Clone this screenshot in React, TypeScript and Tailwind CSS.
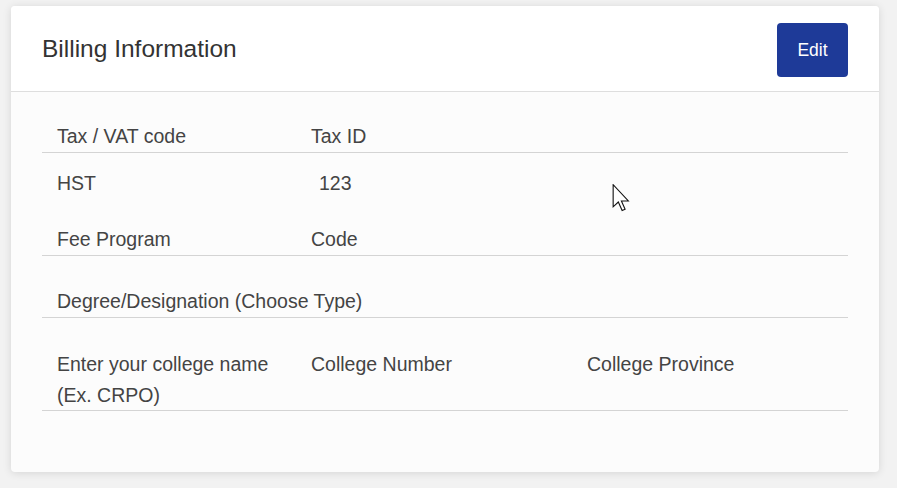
import React from "react";

const font = { fontFamily: '"Liberation Sans", Arial, sans-serif' };

export default function App() {
    return (
        <div className="w-[897px] h-[488px] bg-[#f2f2f2] pt-[6px] pl-[11px] relative overflow-hidden" style={font}>
            <div className="w-[868px] h-[466px] rounded-[4px] bg-[#fcfcfc] shadow-[0_1px_8px_rgba(0,0,0,0.12)] overflow-hidden">
                <header className="h-[86px] bg-white border-b border-[#dedede] flex items-center justify-between px-[31px] pt-[2px]">
                    <h1 className="text-[24.5px] text-[#333] leading-none">Billing Information</h1>
                    <button className="w-[71px] h-[54px] rounded-[4px] bg-[#1e3a98] text-white text-[17.5px] mt-[1px]">
                        Edit
                    </button>
                </header>

                <div className="px-[31px] pt-[29px] text-[19.5px] leading-[31px] text-[#444]">
                    <div className="grid grid-cols-[254px_276px_1fr] pl-[15px] border-b border-[#d4d4d4]">
                        <span>Tax / VAT code</span>
                        <span>Tax ID</span>
                    </div>
                    <div className="grid grid-cols-[254px_276px_1fr] pl-[15px] mt-[15px]">
                        <span>HST</span>
                        <span className="pl-[8px]">123</span>
                    </div>
                    <div className="grid grid-cols-[254px_276px_1fr] pl-[15px] mt-[25px] border-b border-[#d4d4d4]">
                        <span>Fee Program</span>
                        <span>Code</span>
                    </div>
                    <div className="pl-[15px] mt-[30px] border-b border-[#d4d4d4]">
                        Degree/Designation (Choose Type)
                    </div>
                    <div className="grid grid-cols-[254px_276px_1fr] pl-[15px] mt-[31px] h-[62px] border-b border-[#d4d4d4]">
                        <span>
                            Enter your college name
                            <br />
                            (Ex. CRPO)
                        </span>
                        <span>College Number</span>
                        <span>College Province</span>
                    </div>
                </div>
            </div>

            {/* mouse pointer captured in the screenshot */}
            <svg className="absolute left-[612px] top-[184px]" width="20" height="28" viewBox="0 0 13 19">
                <path d="M0.5 0.5 L0.5 15.5 L4 12.2 L6.6 18 L8.6 17.1 L6.1 11.5 L10.8 11.5 Z" fill="#fff" stroke="#111" strokeWidth="0.75" strokeLinejoin="miter" />
            </svg>
        </div>
    );
}
